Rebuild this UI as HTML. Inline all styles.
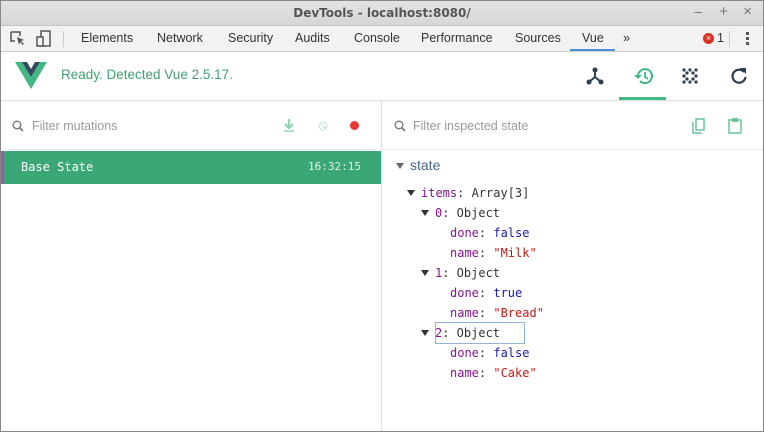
<!DOCTYPE html>
<html><head><style>
*{margin:0;padding:0;box-sizing:border-box}
body{width:764px;height:432px;overflow:hidden;font-family:"Liberation Sans","DejaVu Sans",sans-serif;background:#fff;position:relative;}
.frame{position:absolute;left:0;top:0;width:764px;height:432px;border:1px solid #888;pointer-events:none;z-index:5}
.abs{position:absolute}
.title{left:0;top:0;width:764px;height:26px;background:linear-gradient(#e4e4e4,#d6d6d6);border-bottom:1px solid #c4c4c4;text-align:center;font:bold 12px "DejaVu Sans",sans-serif;color:#555;line-height:26px}
.tabs{left:0;top:26px;width:764px;height:26px;background:#f2f2f2;border-bottom:1px solid #cfcfcf;font-size:12.5px;color:#333}
.tabs span{position:absolute;top:5px}
.mono{font-family:"DejaVu Sans Mono",monospace;font-size:12px}
.k{color:#881391}.s{color:#c41a16}.b{color:#1a1aa6}
.row{position:absolute;height:20px;line-height:20px;color:#333}
.tri{display:inline-block;width:0;height:0;border-left:4px solid transparent;border-right:4px solid transparent;border-top:6px solid #333;margin-right:6px;vertical-align:1px}
</style></head><body>
<div class="frame"></div>
<div class="abs title">DevTools - localhost:8080/</div>
<div class="abs" style="right:62px;top:3px;color:#777;font-size:14px">–</div>
<div class="abs" style="right:36px;top:3px;color:#777;font-size:15px">+</div>
<div class="abs" style="right:12px;top:3px;color:#777;font-size:15px">×</div>
<div class="abs tabs">
<svg class="abs" style="left:10px;top:5px" width="16" height="16"><path d="M1 1h9v4M1 1v9h4" fill="none" stroke="#555" stroke-width="1.5"/><path d="M7 6l7 3-3 1 3 3-1 1-3-3-1 3z" fill="#555"/></svg>
<svg class="abs" style="left:36px;top:4px" width="16" height="18"><rect x="5" y="1" width="9" height="15" fill="none" stroke="#555" stroke-width="1.5"/><rect x="1" y="7" width="6" height="9" fill="#f2f2f2" stroke="#555" stroke-width="1.5"/></svg>
<div class="abs" style="left:63px;top:5px;width:1px;height:16px;background:#ccc"></div>
<span style="left:81px">Elements</span><span style="left:157px">Network</span><span style="left:228px">Security</span><span style="left:295px">Audits</span><span style="left:354px">Console</span><span style="left:421px">Performance</span><span style="left:515px">Sources</span><span style="left:582px">Vue</span><span style="left:623px">»</span>
<div class="abs" style="left:570px;top:23px;width:45px;height:2px;background:#4a90d9"></div>
<div class="abs" style="left:703px;top:7px;width:11px;height:11px;border-radius:50%;background:#d93025;color:#fff;font-size:9px;line-height:11px;text-align:center">×</div>
<span style="left:717px">1</span>
<div class="abs" style="left:729px;top:5px;width:1px;height:16px;background:#ccc"></div>
<div class="abs" style="left:746px;top:6px;width:3px;height:3px;background:#555;box-shadow:0 5px #555,0 10px #555"></div>
</div>
<svg class="abs" style="left:15px;top:62px" width="32" height="28"><path d="M0 0h7l9 15 9-15h7L16 27z" fill="#41b883"/><path d="M7 0h5l4 7 4-7h5l-9 15z" fill="#35495e"/></svg>
<div class="abs" style="left:61px;top:67px;font-size:13.5px;color:#42a075">Ready. Detected Vue 2.5.17.</div>
<svg class="abs" style="left:585px;top:67px" width="20" height="18"><path d="M10 2v8M10 10l-6 5M10 10l6 5" stroke="#2c3e50" stroke-width="2" fill="none"/><circle cx="10" cy="3" r="2.5" fill="#2c3e50"/><circle cx="4" cy="15" r="2.5" fill="#2c3e50"/><circle cx="16" cy="15" r="2.5" fill="#2c3e50"/></svg>
<svg class="abs" style="left:632px;top:66px" width="22" height="20"><path d="M6 10a7 7 0 1 1 2 5" stroke="#42b983" stroke-width="2" fill="none"/><path d="M2 9h8l-4 4z" fill="#42b983"/><path d="M13 6v5l3 2" stroke="#42b983" stroke-width="1.8" fill="none"/></svg>
<div class="abs" style="left:619px;top:97px;width:47px;height:3px;background:#42b983"></div>
<svg class="abs" style="left:682px;top:68px" width="16" height="16" fill="#2c3e50"><circle cx="2" cy="2" r="1.6"/><circle cx="8" cy="2" r="1.6"/><circle cx="14" cy="2" r="1.6"/><circle cx="5" cy="5" r="1.6"/><circle cx="11" cy="5" r="1.6"/><circle cx="2" cy="8" r="1.6"/><circle cx="14" cy="8" r="1.6"/><circle cx="5" cy="11" r="1.6"/><circle cx="11" cy="11" r="1.6"/><circle cx="2" cy="14" r="1.6"/><circle cx="8" cy="14" r="1.6"/><circle cx="14" cy="14" r="1.6"/></svg>
<svg class="abs" style="left:730px;top:67px" width="18" height="18"><path d="M14 5a6.5 6.5 0 1 0 1.5 5" stroke="#2c3e50" stroke-width="2.2" fill="none"/><path d="M10 1h6v6z" fill="#2c3e50"/></svg>
<div class="abs" style="left:0;top:100px;width:764px;height:1px;background:#e2e2e2;box-shadow:0 1px 2px rgba(0,0,0,.08)"></div>
<div class="abs" style="left:381px;top:101px;width:1px;height:331px;background:#e0e0e0"></div>
<div class="abs" style="left:0;top:149px;width:764px;height:1px;background:#eee"></div>
<svg class="abs" style="left:12px;top:120px" width="12" height="12"><circle cx="5" cy="5" r="3.8" stroke="#777" stroke-width="1.4" fill="none"/><path d="M8 8l3 3" stroke="#777" stroke-width="1.6"/></svg>
<div class="abs" style="left:32px;top:119px;font-size:12.5px;color:#999">Filter mutations</div>
<svg class="abs" style="left:283px;top:118px" width="12" height="14"><path d="M6 1v8M2 6l4 4 4-4" stroke="#8fd3b3" stroke-width="2.2" fill="none"/><path d="M1 13h10" stroke="#8fd3b3" stroke-width="1.4"/></svg>
<svg class="abs" style="left:318px;top:121px" width="10" height="10"><circle cx="5" cy="5" r="3.8" stroke="#c8e6d8" stroke-width="1.2" fill="none"/><path d="M2.5 2.5l5 5" stroke="#c8e6d8" stroke-width="1.2"/></svg>
<div class="abs" style="left:350px;top:121px;width:9px;height:9px;border-radius:50%;background:#e53935"></div>
<svg class="abs" style="left:394px;top:120px" width="12" height="12"><circle cx="5" cy="5" r="3.8" stroke="#777" stroke-width="1.4" fill="none"/><path d="M8 8l3 3" stroke="#777" stroke-width="1.6"/></svg>
<div class="abs" style="left:413px;top:119px;font-size:12.5px;color:#999">Filter inspected state</div>
<svg class="abs" style="left:691px;top:118px" width="14" height="16"><path d="M2 4v11h9" stroke="#6cc49b" stroke-width="1.5" fill="none"/><rect x="5" y="1" width="8" height="11" stroke="#6cc49b" stroke-width="1.5" fill="none"/></svg>
<svg class="abs" style="left:728px;top:117px" width="14" height="17"><rect x="1" y="3" width="12" height="13" stroke="#6cc49b" stroke-width="1.5" fill="none"/><rect x="4" y="1" width="6" height="4" fill="#6cc49b"/></svg>
<div class="abs" style="left:0;top:151px;width:381px;height:33px;background:#3ba776"></div>
<div class="abs" style="left:0;top:151px;width:4px;height:33px;background:#9b59b6"></div>
<div class="abs mono" style="left:21px;top:160px;color:#fff;font-size:12px">Base State</div>
<div class="abs mono" style="left:308px;top:160px;color:#dff3ea;font-size:11px">16:32:15</div>
<div class="abs" style="left:396px;top:157px;font-size:14px;color:#486887"><span class="tri" style="border-top-color:#666"></span>state</div>
<div class="mono">
<div class="row" style="left:407px;top:183px"><span class="tri"></span><span class="k">items</span>: Array[3]</div>
<div class="row" style="left:421px;top:203px"><span class="tri"></span><span class="k">0</span>: Object</div>
<div class="row" style="left:450px;top:223px"><span class="k">done</span>: <span class="b">false</span></div>
<div class="row" style="left:450px;top:243px"><span class="k">name</span>: <span class="s">"Milk"</span></div>
<div class="row" style="left:421px;top:263px"><span class="tri"></span><span class="k">1</span>: Object</div>
<div class="row" style="left:450px;top:283px"><span class="k">done</span>: <span class="b">true</span></div>
<div class="row" style="left:450px;top:303px"><span class="k">name</span>: <span class="s">"Bread"</span></div>
<div class="row" style="left:421px;top:323px"><span class="tri"></span><span class="k">2</span>: Object</div>
<div class="abs" style="left:435px;top:322px;width:90px;height:22px;border:1px solid #8fb4d9"></div>
<div class="row" style="left:450px;top:343px"><span class="k">done</span>: <span class="b">false</span></div>
<div class="row" style="left:450px;top:363px"><span class="k">name</span>: <span class="s">"Cake"</span></div>
</div>
</body></html>
